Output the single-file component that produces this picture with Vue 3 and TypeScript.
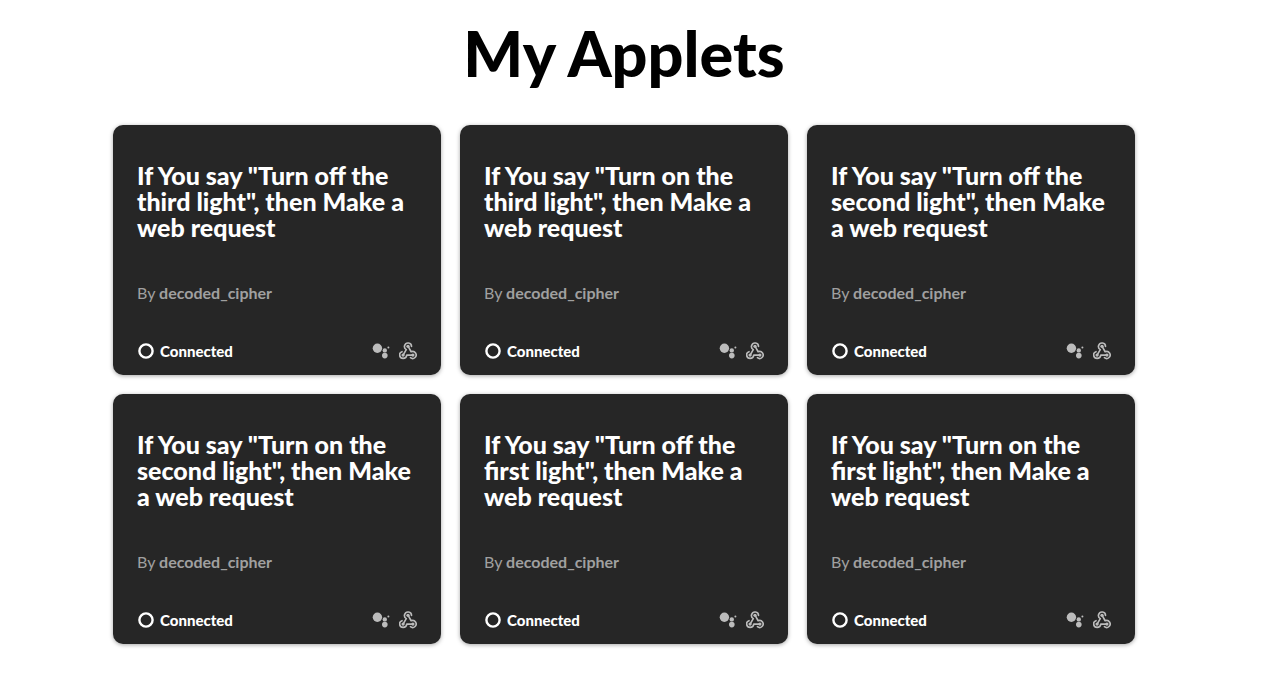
<script setup lang="ts">
interface Applet {
  id: number
  title: string
  author: string
}

const applets: Applet[] = [
  { id: 1, title: 'If You say "Turn off the third light", then Make a web request', author: 'decoded_cipher' },
  { id: 2, title: 'If You say "Turn on the third light", then Make a web request', author: 'decoded_cipher' },
  { id: 3, title: 'If You say "Turn off the second light", then Make a web request', author: 'decoded_cipher' },
  { id: 4, title: 'If You say "Turn on the second light", then Make a web request', author: 'decoded_cipher' },
  { id: 5, title: 'If You say "Turn off the first light", then Make a web request', author: 'decoded_cipher' },
  { id: 6, title: 'If You say "Turn on the first light", then Make a web request', author: 'decoded_cipher' },
]
</script>

<template>
  <main class="page">
    <h1 class="heading">My Applets</h1>
    <ul class="grid">
      <li v-for="applet in applets" :key="applet.id" class="card">
        <h2 class="title">{{ applet.title }}</h2>
        <p class="author">By <b>{{ applet.author }}</b></p>
        <div class="footer">
          <span class="status">
            <svg class="ring" viewBox="0 0 16 16" aria-hidden="true">
              <circle cx="8" cy="8" r="6.6" />
            </svg>
            Connected
          </span>
          <span class="services">
            <svg class="icon" viewBox="0 0 18 18" aria-hidden="true">
              <circle cx="5.4" cy="6.2" r="4.7" />
              <circle cx="12.8" cy="8.4" r="2.2" />
              <circle cx="12.8" cy="13.6" r="2.8" />
              <circle cx="16.4" cy="5.6" r="1" />
            </svg>
            <svg class="icon" viewBox="1 1 22 22" aria-hidden="true">
              <g class="hooks">
                <path d="M18 17h-7.500c-.3 2.300-2.200 4-4.500 4a4.200 4.200 0 0 1-1.300-8.200" />
                <path d="m6 17 3.900-6.700A4.300 4.300 0 1 1 16.300 6.500" />
                <path d="m12 6 3.800 6.900A4.300 4.300 0 1 1 15 20.200" />
              </g>
              <circle cx="12" cy="6.300" r="2" />
              <circle cx="6" cy="17" r="2" />
              <circle cx="18" cy="17" r="2" />
            </svg>
          </span>
        </div>
      </li>
    </ul>
  </main>
</template>

<style>
body {
  margin: 0;
  background: #fff;
}
</style>

<style scoped>
.page {
  box-sizing: border-box;
  padding: 15px 145px 32px 113px;
  font-family: "Avenir Next", Lato, "Open Sans", sans-serif;
}
.heading {
  margin: 0 0 34px;
  font-size: 63px;
  line-height: 76px;
  font-weight: 900;
  text-align: center;
  color: #000;
}
.grid {
  display: grid;
  grid-template-columns: repeat(3, 1fr);
  gap: 19px;
  margin: 0;
  padding: 0;
  list-style: none;
}
.card {
  box-sizing: border-box;
  display: flex;
  flex-direction: column;
  min-height: 250px;
  padding: 37px 24px 14px;
  border-radius: 10px;
  background: #262626;
  box-shadow: 0 1px 4px rgba(0, 0, 0, 0.35);
  color: #fff;
}
.title {
  margin: 0;
  font-size: 25px;
  line-height: 26px;
  font-weight: 900;
}
.author {
  margin: 43px 0 0;
  font-size: 16px;
  line-height: 20px;
  color: #a0a0a0;
}
.author b {
  font-weight: 700;
}
.footer {
  display: flex;
  align-items: center;
  justify-content: space-between;
  margin-top: auto;
}
.status {
  display: flex;
  align-items: center;
  gap: 6px;
  padding-left: 1px;
  font-size: 15px;
  line-height: 20px;
  font-weight: 900;
}
.ring {
  width: 16px;
  height: 16px;
  fill: none;
  stroke: #fff;
  stroke-width: 2.4;
}
.services {
  display: flex;
  gap: 9px;
}
.icon {
  width: 18px;
  height: 18px;
  fill: #bcbcbc;
}
.hooks {
  fill: none;
  stroke: #bcbcbc;
  stroke-width: 2;
  stroke-linecap: round;
  stroke-linejoin: round;
}
</style>
